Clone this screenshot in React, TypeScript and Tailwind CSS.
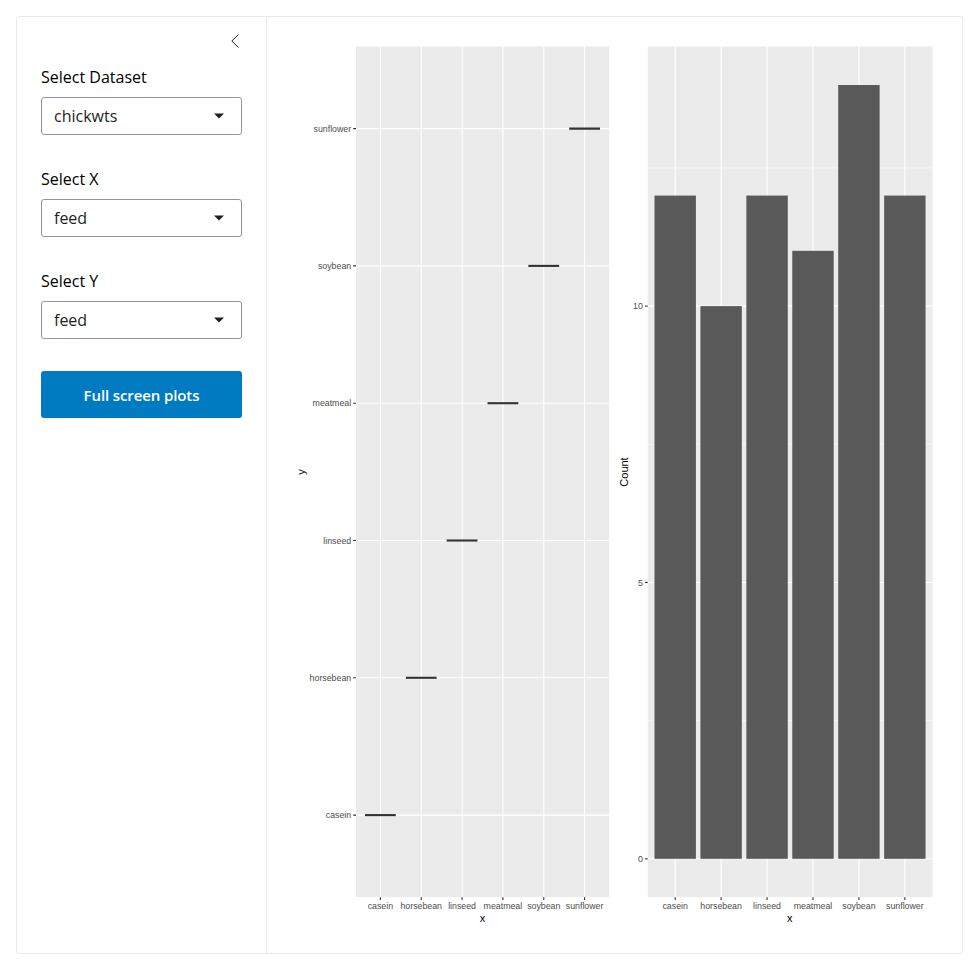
import React from "react";

const FEEDS = ["casein", "horsebean", "linseed", "meatmeal", "soybean", "sunflower"];
const COUNTS = [12, 10, 12, 11, 14, 12];

const TICK = "fill-[#4d4d4d] font-['Liberation_Sans',Arial,sans-serif] text-[8.8px]";
const TITLE = "fill-black font-['Liberation_Sans',Arial,sans-serif] text-[11px]";

function SelectField({ label, value }: { label: string; value: string }) {
  return (
    <div className="flex flex-col gap-2">
      <span className="text-base leading-6 whitespace-nowrap text-black">{label}</span>
      <button
        type="button"
        className="flex h-[38px] w-full items-center justify-between rounded-[3px] border border-[#8d959e] bg-white pr-[17px] pl-3 text-base text-[#1d1f21]"
      >
        <span>{value}</span>
        <svg width="10" height="6" viewBox="0 0 10 6" className="mb-px">
          <path d="M0 0.5H10L5 5.5Z" fill="#1d1f21" />
        </svg>
      </button>
    </div>
  );
}

function BoxPlot() {
  const x = (i: number) => 380.4 + i * 40.84;
  const y = (i: number) => 815.1 - i * 137.3;
  return (
    <svg width="322" height="888" viewBox="291 41 322 888" className="shrink-0">
      <rect x="356" y="46.4" width="253.2" height="850.8" fill="#ebebeb" />
      {FEEDS.map((f, i) => (
        <g key={f}>
          <path d={`M356 ${y(i)}H609.2M${x(i)} 46.4V897.2`} stroke="#fff" strokeWidth="1.1" />
          <path d={`M353.2 ${y(i)}H356M${x(i)} 897.2V900`} stroke="#333" strokeWidth="1.1" />
          <text x="351.2" y={y(i) + 3.2} textAnchor="end" className={TICK}>{f}</text>
          <text x={x(i)} y="909" textAnchor="middle" className={TICK}>{f}</text>
        </g>
      ))}
      {FEEDS.map((f, i) => (
        <path key={f} d={`M${x(i) - 15.4} ${y(i)}h30.8`} stroke="#333" strokeWidth="2.1" />
      ))}
      <text x="482.4" y="921.5" textAnchor="middle" className={TITLE}>x</text>
      <text transform="translate(304.5 472) rotate(-90)" textAnchor="middle" className={TITLE}>y</text>
    </svg>
  );
}

function BarPlot() {
  const x = (i: number) => 675.2 + i * 45.93;
  const y = (v: number) => 858.8 - v * 55.27;
  return (
    <svg width="325" height="888" viewBox="613 41 325 888" className="shrink-0">
      <rect x="647.7" y="46.4" width="284.9" height="850.8" fill="#ebebeb" />
      {[2.5, 7.5, 12.5].map((v) => (
        <path key={v} d={`M647.7 ${y(v)}H932.6`} stroke="#fff" strokeWidth="0.55" />
      ))}
      {[0, 5, 10].map((v) => (
        <g key={v}>
          <path d={`M647.7 ${y(v)}H932.6`} stroke="#fff" strokeWidth="1.1" />
          <path d={`M644.9 ${y(v)}h2.8`} stroke="#333" strokeWidth="1.1" />
          <text x="642.9" y={y(v) + 3.2} textAnchor="end" className={TICK}>{v}</text>
        </g>
      ))}
      {FEEDS.map((f, i) => (
        <g key={f}>
          <path d={`M${x(i)} 46.4V897.2`} stroke="#fff" strokeWidth="1.1" />
          <path d={`M${x(i)} 897.2V900`} stroke="#333" strokeWidth="1.1" />
          <rect x={x(i) - 20.7} y={y(COUNTS[i])} width="41.4" height={COUNTS[i] * 55.27} fill="#595959" />
          <text x={x(i)} y="909" textAnchor="middle" className={TICK}>{f}</text>
        </g>
      ))}
      <text x="789.8" y="921.5" textAnchor="middle" className={TITLE}>x</text>
      <text transform="translate(628 472) rotate(-90)" textAnchor="middle" className={TITLE}>Count</text>
    </svg>
  );
}

export default function App() {
  return (
    <div className="h-[970px] w-[979px] bg-white p-4 font-['Open_Sans','Noto_Sans',sans-serif]">
      <div className="flex h-[938px] w-[947px] overflow-hidden rounded-[3px] border border-[#e6e9ed]">
        <aside className="flex w-[250px] shrink-0 flex-col border-r border-[#e6e9ed] px-6 pt-4">
          <button type="button" className="mb-6 flex h-4 w-4 items-center justify-center self-end" aria-label="Collapse">
            <svg width="16" height="16" viewBox="0 0 16 16" fill="none">
              <path d="M12.2 1.8 5.8 8l6.4 6.2" stroke="#1d1f21" strokeWidth="1" strokeLinecap="round" strokeLinejoin="round" />
            </svg>
          </button>
          <div className="-mt-2 flex flex-col gap-8">
            <SelectField label="Select Dataset" value="chickwts" />
            <SelectField label="Select X" value="feed" />
            <SelectField label="Select Y" value="feed" />
            <button type="button" className="h-[47px] rounded-[3px] bg-[#007bc2] pt-0.5 text-[15px] font-semibold tracking-[-0.11px] text-white">
              Full screen plots
            </button>
          </div>
        </aside>
        <main className="flex min-w-0 flex-1 p-6">
          <BoxPlot />
          <BarPlot />
        </main>
      </div>
    </div>
  );
}
